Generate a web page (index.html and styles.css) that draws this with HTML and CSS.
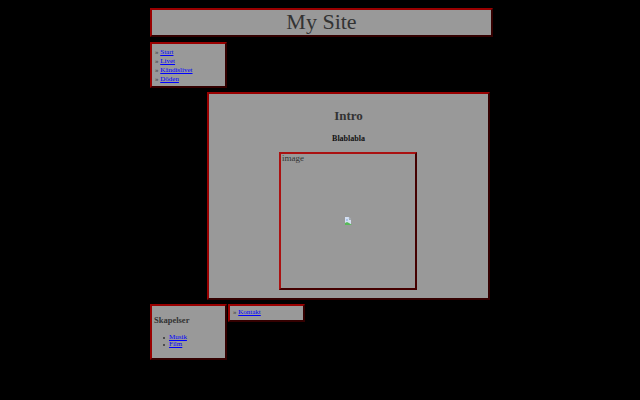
FILE: index.html
```html
<!DOCTYPE html>
<html lang="en">
<head>
    <meta charset="UTF-8">
    <title>My Site</title>
    <link rel="stylesheet" href="styles.css">
</head>
<body>
    <div class="page">
        <div class="box header">My Site</div>

        <ul class="box nav">
            <li>» <a href="#">Start</a></li>
            <li>» <a href="#">Livet</a></li>
            <li>» <a href="#">Kändislivet</a></li>
            <li>» <a href="#">Döden</a></li>
        </ul>

        <div class="box main">
            <h2>Intro</h2>
            <p class="lead">Blablabla</p>
            <div class="image-frame">
                <span class="image-label">image</span>
                <svg class="broken-image" width="7" height="8" viewBox="0 0 7 8">
                    <rect x="0" y="0" width="6" height="8" fill="#d5e0f2"/>
                    <path d="M4 0h3v3h-3z" fill="#9a9a9a"/>
                    <path d="M4 0v2h2" fill="none" stroke="#b7c6dc" stroke-width="0.6"/>
                    <path d="M0 8v-2l2-1 2 1 3 2z" fill="#58b858"/>
                    <path d="M1 2h2v2h-2z" fill="#a9c3e8"/>
                </svg>
            </div>
        </div>

        <div class="bottom">
            <div class="box creations">
                <h4>Skapelser</h4>
                <ul>
                    <li><a href="#">Musik</a></li>
                    <li><a href="#">Film</a></li>
                </ul>
            </div>
            <ul class="box contact">
                <li>» <a href="#">Kontakt</a></li>
            </ul>
        </div>
    </div>
</body>
</html>
```

FILE: styles.css
```css
body {
    margin: 0;
    background-color: #000;
    color: #333;
    font-family: "Liberation Serif", serif;
}
a {
    color: #00f;
}
ul {
    margin: 0;
    list-style: none;
}
.page {
    width: 343px;
    margin: 8px 0 0 150px;
}
.box {
    box-sizing: border-box;
    background-color: #999;
    border: 2px solid;
    border-color: #900 #300 #300 #900;
}
.header {
    height: 29px;
    margin-bottom: 5px;
    font-size: 22px;
    line-height: 24px;
    text-align: center;
}
.nav {
    width: 77px;
    height: 46px;
    margin-bottom: 4px;
    padding: 4px 0 0 3px;
    font-size: 7px;
    line-height: 9px;
}
.main {
    width: 283px;
    height: 208px;
    margin: 0 0 4px 57px;
    padding-top: 14px;
}
.main h2 {
    margin: 0 0 11px;
    font-size: 13px;
    line-height: 15px;
    text-align: center;
}
.lead {
    margin: 0 0 8px;
    color: #111;
    font-size: 8px;
    font-weight: bold;
    line-height: 10px;
    text-align: center;
}
.image-frame {
    box-sizing: border-box;
    display: flex;
    align-items: center;
    justify-content: center;
    position: relative;
    width: 138px;
    height: 138px;
    margin-left: 70px;
    border: 2px solid;
    border-color: #a11 #400 #400 #a11;
}
.image-label {
    position: absolute;
    top: -1px;
    left: 1px;
    font-size: 9px;
    line-height: 10px;
}
.bottom {
    display: flex;
    align-items: flex-start;
    gap: 1px;
}
.creations {
    width: 77px;
    height: 56px;
    padding: 9px 0 0 2px;
}
.creations h4 {
    margin: 0 0 8px;
    font-size: 8.5px;
    line-height: 11px;
}
.creations ul {
    padding-left: 15px;
    font-size: 7px;
    line-height: 7px;
}
.creations li {
    position: relative;
}
.creations li::before {
    content: "";
    position: absolute;
    top: 3px;
    left: -6px;
    width: 2px;
    height: 2px;
    border-radius: 50%;
    background-color: #333;
}
.contact {
    width: 77px;
    height: 18px;
    padding: 2px 0 0 3px;
    font-size: 7px;
    line-height: 9px;
}
```
